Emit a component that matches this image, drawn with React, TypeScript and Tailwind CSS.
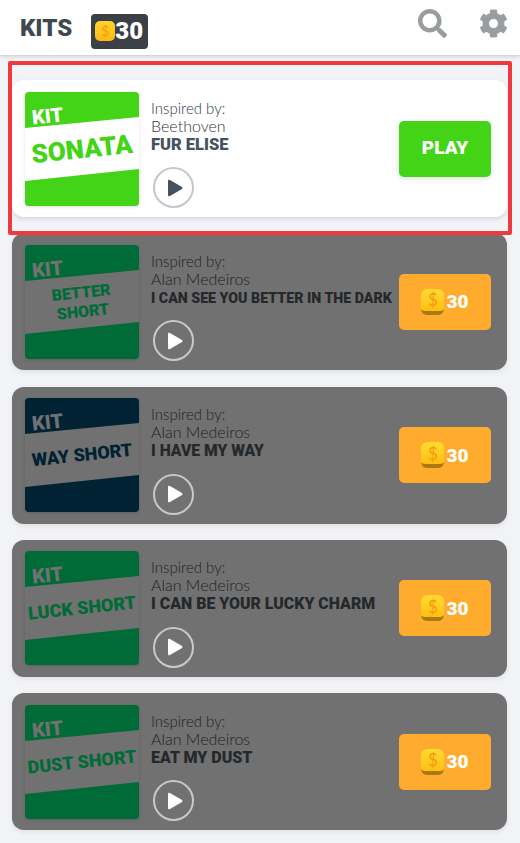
import { FaCog, FaSearch } from "react-icons/fa";

const kits = [
  { title: ["BETTER", "SHORT"], artist: "Alan Medeiros", song: "I CAN SEE YOU BETTER IN THE DARK", color: "green", songSize: "text-[14.2px]" },
  { title: ["WAY SHORT"], artist: "Alan Medeiros", song: "I HAVE MY WAY", color: "navy", songSize: "text-[15.7px]" },
  { title: ["LUCK SHORT"], artist: "Alan Medeiros", song: "I CAN BE YOUR LUCKY CHARM", color: "green", songSize: "text-[15.9px]" },
  { title: ["DUST SHORT"], artist: "Alan Medeiros", song: "EAT MY DUST", color: "green", songSize: "text-[16px]" },
];

const Coin = ({ small }: { small?: boolean }) => (
  <div
    className={
      small
        ? "flex h-[20px] w-[20px] items-center justify-center rounded-[5px] bg-gradient-to-b from-[#ffd42a] to-[#ffb814] text-[14px] leading-none text-[#f59a0c]"
        : "flex h-[26px] w-[23px] items-center justify-center rounded-[6px] border-b-[4px] border-[#a87a10] bg-gradient-to-b from-[#ffdc2e] to-[#ffbe12] text-[17px] leading-none text-[#f59a0c]"
    }
  >
    $
  </div>
);

const Cover = ({ lines, bg, band, ink, kit, size }: { lines: string[]; bg: string; band: string; ink: string; kit: string; size: string }) => (
  <div className={`relative h-[114px] w-[114px] shrink-0 overflow-hidden rounded-[4px] shadow-[0_1px_3px_rgba(0,0,0,0.15)] ${bg}`}>
    <svg viewBox="0 0 114 114" className={`absolute inset-0 h-full w-full ${band}`}>
      <polygon points="0,36 114,25 114,77 0,89" fill="currentColor" />
    </svg>
    <div className={`absolute left-[7px] top-[13px] -rotate-6 font-['Roboto',sans-serif] text-[20px] font-black leading-[22px] ${kit}`}>KIT</div>
    <div className={`absolute inset-x-0 top-[30px] flex h-[54px] -rotate-6 flex-col items-center justify-center font-['Roboto',sans-serif] font-black ${size} ${ink}`}>
      {lines.map((l) => (
        <div key={l} className="whitespace-nowrap">{l}</div>
      ))}
    </div>
  </div>
);

const Info = ({ artist, song, ink, thin, songSize }: { artist: string; song: string; ink: string; thin: string; songSize: string }) => (
  <div className="ml-[12px] flex h-[114px] min-w-0 flex-1 flex-col">
    <div className={`mt-[7px] text-[15px] font-light leading-[18px] ${thin}`}>Inspired by:</div>
    <div className={`text-[16px] font-light leading-[18px] ${thin}`}>{artist}</div>
    <div className={`mt-[1px] whitespace-nowrap font-['Roboto',sans-serif] font-black leading-[18px] ${songSize} ${ink}`}>{song}</div>
  </div>
);

const PlayCircle = ({ border, fill }: { border: string; fill: string }) => (
  <div className={`absolute left-[141px] top-[87px] flex h-[41px] w-[41px] items-center justify-center rounded-full border-2 ${border}`}>
    <svg viewBox="0 0 16 18" className={`ml-[2px] h-[18px] w-[16px] ${fill}`}>
      <path d="M1 2 Q1 0 3 1 L15 8 Q16 9 15 10 L3 17 Q1 18 1 16 Z" fill="currentColor" />
    </svg>
  </div>
);

export default function App() {
  return (
    <div className="relative h-[843px] w-[520px] overflow-hidden bg-[#f2f3f7] font-['Lato',sans-serif]">
      {/* Header */}
      <div className="flex h-[55px] items-center bg-white pl-[20px] pr-[12px] shadow-[0_1px_4px_rgba(0,0,0,0.2)]">
        <div className="font-['Roboto',sans-serif] text-[24px] font-black leading-none text-[#3f474f]">KITS</div>
        <div className="ml-[19px] mt-[7px] flex h-[35px] w-[57px] items-center rounded-[4px] bg-[#3b4047] pl-[4px]">
          <Coin small />
          <span className="font-['Roboto',sans-serif] text-[24px] font-black leading-none text-white">30</span>
        </div>
        <div className="ml-auto flex items-center gap-[32px] pb-[8px]">
          <FaSearch className="h-[29px] w-[29px] text-[#9a9da0]" />
          <FaCog className="h-[29px] w-[29px] text-[#9a9da0]" />
        </div>
      </div>

      {/* Kit list */}
      <div className="flex flex-col gap-[16.3px] pl-[12px] pr-[13px] pt-[25px]">
        <div className="relative flex h-[137px] items-center rounded-[12px] bg-white pl-[13px] pr-[16px] shadow-[0_2px_5px_rgba(0,0,0,0.12)]">
          <Cover lines={["SONATA"]} bg="bg-[#43d317]" band="text-white" ink="text-[#43d317]" kit="text-white" size="text-[26px] leading-[32px]" />
          <Info artist="Beethoven" song="FUR ELISE" ink="text-[#46525d]" thin="text-[#2f373e]" songSize="text-[16.5px]" />
          <PlayCircle border="border-[#c4c6c8]" fill="text-[#46525d]" />
          <div className="flex h-[56px] w-[92px] shrink-0 items-center justify-center rounded-[5px] bg-[#43d317] font-['Roboto',sans-serif] text-[19px] font-black text-white shadow-[0_2px_5px_rgba(0,0,0,0.12)]">PLAY</div>
        </div>

        {kits.map((kit) => (
          <div key={kit.song} className="relative flex h-[137px] items-center rounded-[12px] bg-[#717171] pl-[13px] pr-[16px] shadow-[0_2px_5px_rgba(0,0,0,0.08)]">
            <Cover
              lines={kit.title}
              bg={kit.color === "navy" ? "bg-[#002232]" : "bg-[#006b37]"}
              band="text-[#717171]"
              ink={kit.color === "navy" ? "text-[#002232]" : "text-[#006b37]"}
              kit="text-[#717171]"
              size={kit.title.length > 1 ? "text-[16px] leading-[19px]" : "text-[18px] leading-[24px]"}
            />
            <Info artist={kit.artist} song={kit.song} ink="text-[#25282b]" thin="text-[#1f2124]" songSize={kit.songSize} />
            <PlayCircle border="border-[#c9c9c9]" fill="text-white" />
            <div className="flex h-[56px] w-[92px] shrink-0 items-center justify-center gap-[2px] rounded-[5px] bg-[#ffac2e]">
              <Coin />
              <span className="font-['Roboto',sans-serif] text-[19px] font-black leading-none text-white">30</span>
            </div>
          </div>
        ))}
      </div>

      {/* Highlight around the first kit */}
      <div className="absolute left-[8px] top-[61px] h-[174px] w-[504px] rounded-[2px] border-[4px] border-[#ee3a3e]" />
    </div>
  );
}
